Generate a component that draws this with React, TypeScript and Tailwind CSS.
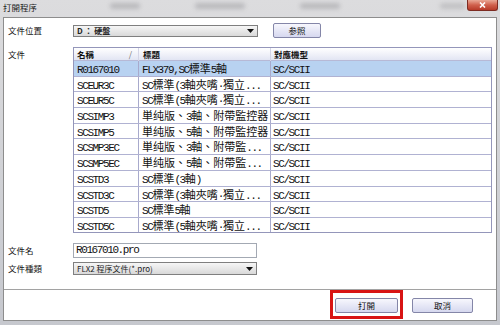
import React from 'react';

const rows: [string, string, string][] = [
  ['R0167010', 'FLX379,SC標準5軸', 'SC/SCII'],
  ['SCEUR3C', 'SC標準(3軸夾嘴·獨立...', 'SC/SCII'],
  ['SCEUR5C', 'SC標準(5軸夾嘴·獨立...', 'SC/SCII'],
  ['SCSIMP3', '単纯版、3軸、附帶監控器', 'SC/SCII'],
  ['SCSIMP5', '単纯版、5軸、附帶監控器', 'SC/SCII'],
  ['SCSMP3EC', '単纯版、3軸、附帶監...', 'SC/SCII'],
  ['SCSMP5EC', '単纯版、5軸、附帶監...', 'SC/SCII'],
  ['SCSTD3', 'SC標準(3軸)', 'SC/SCII'],
  ['SCSTD3C', 'SC標準(3軸夾嘴·獨立...', 'SC/SCII'],
  ['SCSTD5', 'SC標準5軸', 'SC/SCII'],
  ['SCSTD5C', 'SC標準(5軸夾嘴·獨立...', 'SC/SCII'],
];

// half-width runs in a mono face, full-width in the CJK face (SimSun look)
function Mix({ s }: { s: string }) {
  const parts = s.split(/([\x20-\x7e·]+)/).filter(Boolean);
  return (
    <>
      {parts.map((p, i) =>
        /^[\x20-\x7e·]+$/.test(p) ? (
          <span key={i} className="font-['Liberation_Mono',monospace] text-[11px] tracking-[-1.4px]">
            {p}
          </span>
        ) : (
          <span key={i}>{p}</span>
        )
      )}
    </>
  );
}

function Arrow() {
  return (
    <svg width="7" height="4" viewBox="0 0 7 4" className="shrink-0">
      <path d="M0 0 H7 L3.5 4 Z" fill="#111" />
    </svg>
  );
}

export default function App() {
  return (
    <div className="w-[500px] h-[325px] flex flex-col overflow-hidden bg-gradient-to-b from-[#dcdcde] to-[#c6c8ce] font-['Noto_Sans_CJK_TC',sans-serif] text-[#111]">
      {/* 標題列 */}
      <div className="h-[17px] relative flex items-start shrink-0">
        <span className="absolute left-[110px] top-[3px] w-[30px] h-[6px] rounded-full bg-[#9a9a9e]/50 blur-[2px]" />
        <span className="absolute left-[195px] top-[3px] w-[50px] h-[6px] rounded-full bg-[#9a9a9e]/50 blur-[2px]" />
        <span className="absolute left-[300px] top-[3px] w-[40px] h-[6px] rounded-full bg-[#9a9a9e]/50 blur-[2px]" />
        <span className="absolute left-[440px] top-[3px] w-[25px] h-[6px] rounded-full bg-[#9a9a9e]/40 blur-[2px]" />
        <span className="pl-[3px] pt-[1px] text-[8.5px] leading-[12px] text-[#222]">打開程序</span>
        <div className="ml-auto mr-[2px] w-[31px] h-[11px] rounded-b-[3px] border border-t-0 border-[#7d2b22] bg-gradient-to-b from-[#e9a896] via-[#d0604c] to-[#b73a28] flex items-center justify-center">
          <svg width="7" height="6" viewBox="0 0 7 6">
            <path d="M1 0.5 L6 5.5 M6 0.5 L1 5.5" stroke="#fff" strokeWidth="1.6" />
          </svg>
        </div>
      </div>

      {/* 內容 */}
      <div className="mx-[3px] h-[304px] bg-white border border-[#8d8d8d] flex flex-col">
        <div className="flex items-center h-[15px] mt-[5px] pl-[4px]">
          <span className="w-[65px] text-[8.5px]">文件位置</span>
          <div className="w-[185px] h-[12px] border border-[#7f7f7f] bg-gradient-to-b from-[#f6f6f6] to-[#d9d9d9] flex items-center px-[3px]">
            <span className="text-[8px] font-bold text-[#222] flex-1">D ： 硬盤</span>
            <Arrow />
          </div>
          <button className="ml-[15px] w-[48px] h-[15px] border border-[#8486a8] rounded-[2px] bg-gradient-to-b from-[#f7f7fd] to-[#d6d8ef] text-[8.5px] leading-none">
            参照
          </button>
        </div>

        <div className="flex mt-[9px] pl-[4px]">
          <span className="w-[65px] text-[8.5px] pt-[1px]">文件</span>
          <div className="w-[419px] h-[186px] border border-[#9496ba] flex flex-col overflow-hidden">
            <div className="grid grid-cols-[65px_132px_1fr] h-[13px] bg-gradient-to-b from-white to-[#e2e5f3] border-b border-[#b7b9d6] text-[8.5px] font-bold leading-[13px]">
              <div className="flex pl-[3px] pr-[6px] border-r border-[#d4d5e6]">
                <span className="flex-1">名稱</span>
                <span className="font-normal text-[#777]">/</span>
              </div>
              <div className="pl-[4px] border-r border-[#d4d5e6]">標題</div>
              <div className="pl-[3px]">對應機型</div>
            </div>
            {rows.map((r, i) => (
              <div
                key={r[0]}
                className={`grid grid-cols-[65px_132px_1fr] h-[15.7px] border-b border-[#b0b2d2] text-[11px] leading-[15px] whitespace-nowrap ${
                  i === 0 ? 'bg-[#b8d2f1]' : 'bg-white'
                }`}
              >
                <div className="pl-[3px] border-r border-[#a8aacc] overflow-hidden"><Mix s={r[0]} /></div>
                <div className="pl-[3px] border-r border-[#a8aacc] overflow-hidden"><Mix s={r[1]} /></div>
                <div className="pl-[2px] overflow-hidden"><Mix s={r[2]} /></div>
              </div>
            ))}
          </div>
        </div>

        <div className="flex items-center mt-[10px] pl-[4px]">
          <span className="w-[65px] text-[8.5px]">文件名</span>
          <div className="w-[184px] h-[15px] border border-[#a3a9b3] bg-white flex items-center pl-[2px] text-[11px]">
            <Mix s="R0167010.pro" />
          </div>
        </div>

        <div className="flex items-center mt-[4px] pl-[4px]">
          <span className="w-[65px] text-[8.5px]">文件種類</span>
          <div className="w-[184px] h-[13px] border border-[#7f7f7f] bg-gradient-to-b from-[#f6f6f6] to-[#d9d9d9] flex items-center px-[3px]">
            <span className="text-[8px] text-[#222] flex-1">FLX2 程序文件(*.pro)</span>
            <Arrow />
          </div>
        </div>

        <div className="mt-[14px] border-t border-[#a2a2a2]" />

        <div className="flex items-start justify-end gap-[14px] mt-[8px] pr-[23px]">
          <div className="relative flex">
            <button className="w-[63px] h-[15px] border border-[#8486a8] rounded-[2px] bg-gradient-to-b from-[#f7f7fd] to-[#d6d8ef] text-[8.5px] leading-none">
              打開
            </button>
            <span className="absolute -left-[5px] -right-[5px] -top-[8px] -bottom-[6px] border-[3px] border-[#d81414]" />
          </div>
          <button className="w-[61px] h-[15px] border border-[#8486a8] rounded-[2px] bg-gradient-to-b from-[#f7f7fd] to-[#d6d8ef] text-[8.5px] leading-none">
            取消
          </button>
        </div>
      </div>
    </div>
  );
}
